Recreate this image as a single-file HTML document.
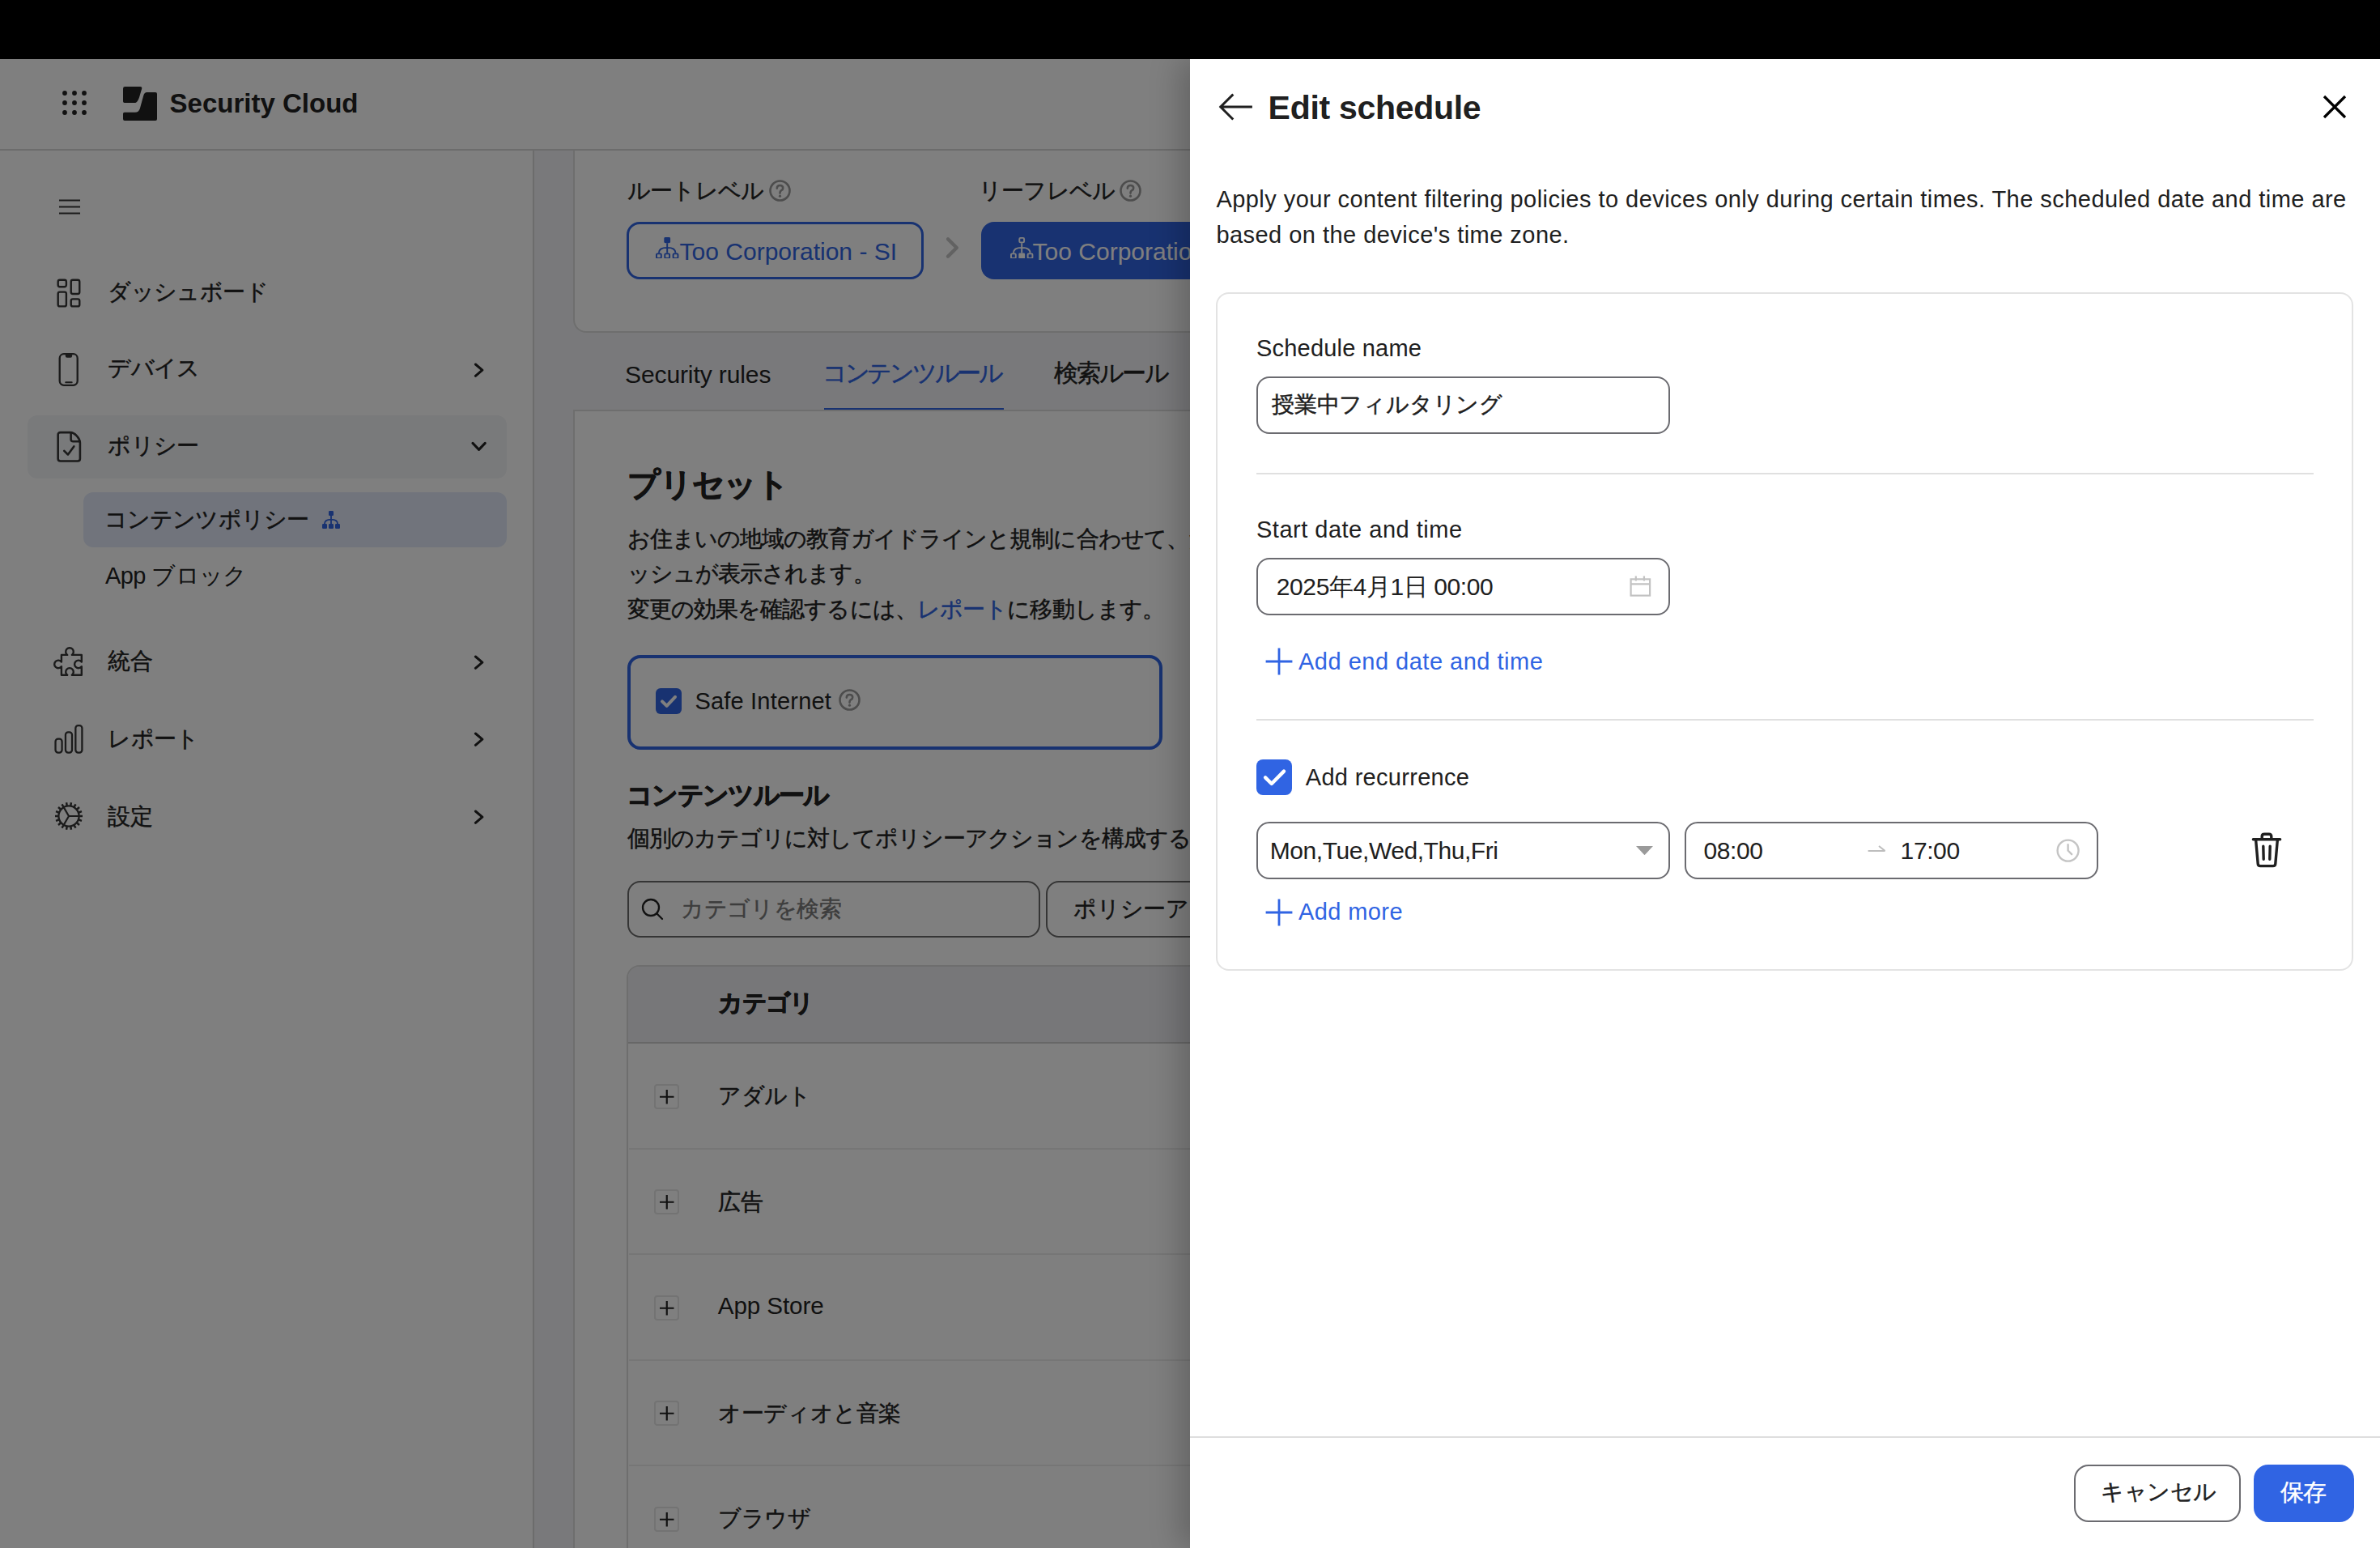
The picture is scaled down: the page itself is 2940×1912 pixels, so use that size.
<!DOCTYPE html>
<html><head><meta charset="utf-8">
<style>
html,body{margin:0;padding:0;background:#000;overflow:hidden;}
body{width:2940px;height:1912px;}
#root{zoom:2;width:1470px;height:956px;position:relative;overflow:hidden;background:#000;font-family:"Liberation Sans",sans-serif;color:#222;}
.a{position:absolute;white-space:nowrap;margin:0;}
@media (max-width:2000px){body{width:1470px;height:956px;}#root{zoom:1;}}
</style></head>
<body><div id="root">
<div class="a" style="left:0.00px;top:36.35px;width:1470.00px;height:919.65px;box-sizing:border-box;background:#f2f3f6;"></div>
<div class="a" style="left:354.20px;top:60.00px;width:1145.80px;height:145.50px;box-sizing:border-box;background:#fff;border:1px solid #dddddd;border-radius:8px;"></div>
<div class="a" style="left:387.50px;top:111.17px;font-size:14px;line-height:14px;-webkit-text-stroke:0.22px currentColor;color:#222222;letter-spacing:-0.4px;">ルートレベル</div>
<svg class="a" style="left:474.80px;top:111.20px;" width="13.5" height="13.5" viewBox="0 0 13.5 13.5" fill="none"><circle cx="6.75" cy="6.75" r="6" stroke="#9a9a9a" stroke-width="1.3"/><path d="M4.9 5.3Q4.9 3.5 6.75 3.5Q8.6 3.5 8.6 5.1Q8.6 6.1 7.6 6.6Q6.75 7.1 6.75 8V8.3" stroke="#9a9a9a" stroke-width="1.3" stroke-linecap="round"/><circle cx="6.75" cy="10.1" r="0.8" fill="#9a9a9a"/></svg>
<div class="a" style="left:604.50px;top:111.17px;font-size:14px;line-height:14px;-webkit-text-stroke:0.22px currentColor;color:#222222;letter-spacing:-0.4px;">リーフレベル</div>
<svg class="a" style="left:691.40px;top:111.20px;" width="13.5" height="13.5" viewBox="0 0 13.5 13.5" fill="none"><circle cx="6.75" cy="6.75" r="6" stroke="#9a9a9a" stroke-width="1.3"/><path d="M4.9 5.3Q4.9 3.5 6.75 3.5Q8.6 3.5 8.6 5.1Q8.6 6.1 7.6 6.6Q6.75 7.1 6.75 8V8.3" stroke="#9a9a9a" stroke-width="1.3" stroke-linecap="round"/><circle cx="6.75" cy="10.1" r="0.8" fill="#9a9a9a"/></svg>
<div class="a" style="left:387.20px;top:137.20px;width:183.55px;height:35.55px;box-sizing:border-box;border:1.5px solid #3064e3;border-radius:8px;"></div>
<svg class="a" style="left:405.20px;top:146.30px;" width="14.2" height="13.4" viewBox="0 0 11 11" preserveAspectRatio="none" fill="none"><rect x="4.0" y="0.0" width="3.0" height="3.0" rx="0.6" fill="#3064e3"/><rect x="0.375" y="8.375" width="2.25" height="2.25" rx="0.5" stroke="#3064e3" stroke-width="0.75"/><rect x="4.375" y="8.375" width="2.25" height="2.25" rx="0.5" stroke="#3064e3" stroke-width="0.75"/><rect x="8.375" y="8.375" width="2.25" height="2.25" rx="0.5" stroke="#3064e3" stroke-width="0.75"/><path d="M5.5 3V8M1.5 8C1.5 6.1 3.2 5.3 5.5 5.3C7.8 5.3 9.5 6.1 9.5 8" stroke="#3064e3" stroke-width="0.75"/></svg>
<div class="a" style="left:419.80px;top:147.82px;font-size:15px;line-height:15px;color:#3064e3;">Too Corporation - SI</div>
<svg class="a" style="left:583.60px;top:146.00px;" width="9.6" height="14" viewBox="0 0 9.6 14" fill="none"><path d="M2 1.6L7.4 7L2 12.4" stroke="#c4c4c4" stroke-width="2.2" stroke-linecap="round" stroke-linejoin="round"/></svg>
<div class="a" style="left:606.00px;top:137.20px;width:294.00px;height:35.55px;box-sizing:border-box;background:#3064e3;border-radius:8px;"></div>
<svg class="a" style="left:624.10px;top:146.30px;" width="14.2" height="13.4" viewBox="0 0 11 11" preserveAspectRatio="none" fill="none"><rect x="4.375" y="0.375" width="2.25" height="2.25" rx="0.5" stroke="#fff" stroke-width="0.75"/><rect x="0.375" y="8.375" width="2.25" height="2.25" rx="0.5" stroke="#fff" stroke-width="0.75"/><rect x="4.0" y="8.0" width="3.0" height="3.0" rx="0.6" fill="#fff"/><rect x="8.375" y="8.375" width="2.25" height="2.25" rx="0.5" stroke="#fff" stroke-width="0.75"/><path d="M5.5 3V8M1.5 8C1.5 6.1 3.2 5.3 5.5 5.3C7.8 5.3 9.5 6.1 9.5 8" stroke="#fff" stroke-width="0.75"/></svg>
<div class="a" style="left:637.80px;top:147.82px;font-size:15px;line-height:15px;color:#fff;">Too Corporation - SI</div>
<div class="a" style="left:386.00px;top:223.87px;font-size:15px;line-height:15px;color:#222222;letter-spacing:-0.05px;">Security rules</div>
<div class="a" style="left:508.00px;top:223.12px;font-size:15px;line-height:15px;-webkit-text-stroke:0.22px currentColor;color:#3064e3;letter-spacing:-1.65px;">コンテンツルール</div>
<div class="a" style="left:651.20px;top:223.12px;font-size:15px;line-height:15px;-webkit-text-stroke:0.22px currentColor;color:#222222;letter-spacing:-1.2px;">検索ルール</div>
<div class="a" style="left:354.20px;top:253.00px;width:1145.80px;height:847.00px;box-sizing:border-box;background:#fff;border:1px solid #dddddd;"></div>
<div class="a" style="left:509.00px;top:252.00px;width:111.00px;height:1.00px;box-sizing:border-box;background:#3064e3;"></div>
<div class="a" style="left:387.50px;top:289.00px;font-size:20px;line-height:20px;-webkit-text-stroke:0.45px currentColor;font-weight:700;color:#222222;letter-spacing:-0.6px;">プリセット</div>
<div class="a" style="left:387.30px;top:325.82px;font-size:14px;line-height:14px;-webkit-text-stroke:0.22px currentColor;color:#222222;letter-spacing:-0.45px;">お住まいの地域の教育ガイドラインと規制に合わせて、たフィルタリングポリシーを選択します。ポリシーにはダ</div>
<div class="a" style="left:387.30px;top:347.57px;font-size:14px;line-height:14px;-webkit-text-stroke:0.22px currentColor;color:#222222;letter-spacing:-0.45px;">ッシュが表示されます。</div>
<div class="a" style="left:387.30px;top:369.57px;font-size:14px;line-height:14px;-webkit-text-stroke:0.22px currentColor;color:#222222;letter-spacing:-0.45px;">変更の効果を確認するには、<span style="color:#3064e3">レポート</span>に移動します。</div>
<div class="a" style="left:387.25px;top:404.40px;width:330.75px;height:58.50px;box-sizing:border-box;border:2px solid #3064e3;border-radius:8px;"></div>
<div class="a" style="left:405.00px;top:425.00px;width:16.00px;height:16.00px;box-sizing:border-box;background:#3064e3;border-radius:3px;"></div>
<svg class="a" style="left:405.00px;top:425.00px;" width="16" height="16" viewBox="0 0 16 16" fill="none"><path d="M4 8.2L6.8 10.9L12 5.4" stroke="#fff" stroke-width="2" stroke-linecap="round" stroke-linejoin="round"/></svg>
<div class="a" style="left:429.20px;top:426.10px;font-size:14.5px;line-height:14.5px;color:#222222;letter-spacing:0.1px;">Safe Internet</div>
<svg class="a" style="left:518.00px;top:425.50px;" width="13.5" height="13.5" viewBox="0 0 13.5 13.5" fill="none"><circle cx="6.75" cy="6.75" r="6" stroke="#9a9a9a" stroke-width="1.3"/><path d="M4.9 5.3Q4.9 3.5 6.75 3.5Q8.6 3.5 8.6 5.1Q8.6 6.1 7.6 6.6Q6.75 7.1 6.75 8V8.3" stroke="#9a9a9a" stroke-width="1.3" stroke-linecap="round"/><circle cx="6.75" cy="10.1" r="0.8" fill="#9a9a9a"/></svg>
<div class="a" style="left:387.00px;top:482.88px;font-size:16px;line-height:16px;-webkit-text-stroke:0.45px currentColor;font-weight:700;color:#222222;letter-spacing:-0.85px;">コンテンツルール</div>
<div class="a" style="left:387.30px;top:511.07px;font-size:14px;line-height:14px;-webkit-text-stroke:0.22px currentColor;color:#222222;letter-spacing:-0.45px;">個別のカテゴリに対してポリシーアクションを構成することができます。</div>
<div class="a" style="left:387.25px;top:543.80px;width:255.15px;height:35.10px;box-sizing:border-box;border:1px solid #6a6a6a;border-radius:8px;background:#fff;"></div>
<svg class="a" style="left:396.00px;top:554.60px;" width="14" height="14" viewBox="0 0 14 14" fill="none"><circle cx="6" cy="6" r="5" stroke="#222222" stroke-width="1.15"/><path d="M9.6 9.6L13 13" stroke="#222222" stroke-width="1.15" stroke-linecap="round"/></svg>
<div class="a" style="left:420.60px;top:554.47px;font-size:14px;line-height:14px;-webkit-text-stroke:0.22px currentColor;color:#7a7a7a;letter-spacing:-0.2px;">カテゴリを検索</div>
<div class="a" style="left:646.20px;top:543.80px;width:353.80px;height:35.10px;box-sizing:border-box;border:1px solid #6a6a6a;border-radius:8px;background:#fff;"></div>
<div class="a" style="left:663.20px;top:554.47px;font-size:14px;line-height:14px;-webkit-text-stroke:0.22px currentColor;color:#222222;letter-spacing:-0.2px;">ポリシーアクション</div>
<div class="a" style="left:386.80px;top:595.75px;width:813.20px;height:404.25px;box-sizing:border-box;border:1px solid #dddddd;border-radius:8px;background:#fff;overflow:hidden;"></div>
<div class="a" style="left:387.80px;top:596.75px;width:812.20px;height:47.55px;box-sizing:border-box;background:#eeeff3;border-bottom:1px solid #cfcfcf;border-top-left-radius:7px;"></div>
<div class="a" style="left:443.60px;top:612.13px;font-size:15px;line-height:15px;-webkit-text-stroke:0.45px currentColor;font-weight:700;color:#222222;letter-spacing:-0.8px;">カテゴリ</div>
<div class="a" style="left:403.75px;top:669.45px;width:15.75px;height:15.50px;box-sizing:border-box;border:1px solid #e6e6e6;border-radius:2px;"></div>
<svg class="a" style="left:403.75px;top:669.45px;" width="15.75" height="15.75" viewBox="0 0 15.75 15.75" fill="none"><path d="M7.875 3.5V12.25M3.5 7.875H12.25" stroke="#222222" stroke-width="1.1"/></svg>
<div class="a" style="left:443.60px;top:670.17px;font-size:14px;line-height:14px;-webkit-text-stroke:0.22px currentColor;color:#222222;letter-spacing:-0.2px;">アダルト</div>
<div class="a" style="left:388.25px;top:708.90px;width:811.75px;height:1.00px;box-sizing:border-box;background:#ececec;"></div>
<div class="a" style="left:403.75px;top:734.70px;width:15.75px;height:15.50px;box-sizing:border-box;border:1px solid #e6e6e6;border-radius:2px;"></div>
<svg class="a" style="left:403.75px;top:734.70px;" width="15.75" height="15.75" viewBox="0 0 15.75 15.75" fill="none"><path d="M7.875 3.5V12.25M3.5 7.875H12.25" stroke="#222222" stroke-width="1.1"/></svg>
<div class="a" style="left:443.60px;top:735.42px;font-size:14px;line-height:14px;-webkit-text-stroke:0.22px currentColor;color:#222222;letter-spacing:-0.2px;">広告</div>
<div class="a" style="left:388.25px;top:774.15px;width:811.75px;height:1.00px;box-sizing:border-box;background:#ececec;"></div>
<div class="a" style="left:403.75px;top:799.95px;width:15.75px;height:15.50px;box-sizing:border-box;border:1px solid #e6e6e6;border-radius:2px;"></div>
<svg class="a" style="left:403.75px;top:799.95px;" width="15.75" height="15.75" viewBox="0 0 15.75 15.75" fill="none"><path d="M7.875 3.5V12.25M3.5 7.875H12.25" stroke="#222222" stroke-width="1.1"/></svg>
<div class="a" style="left:443.40px;top:799.14px;font-size:14.8px;line-height:14.8px;color:#222222;letter-spacing:-0.05px;">App Store</div>
<div class="a" style="left:388.25px;top:839.40px;width:811.75px;height:1.00px;box-sizing:border-box;background:#ececec;"></div>
<div class="a" style="left:403.75px;top:865.20px;width:15.75px;height:15.50px;box-sizing:border-box;border:1px solid #e6e6e6;border-radius:2px;"></div>
<svg class="a" style="left:403.75px;top:865.20px;" width="15.75" height="15.75" viewBox="0 0 15.75 15.75" fill="none"><path d="M7.875 3.5V12.25M3.5 7.875H12.25" stroke="#222222" stroke-width="1.1"/></svg>
<div class="a" style="left:443.60px;top:865.92px;font-size:14px;line-height:14px;-webkit-text-stroke:0.22px currentColor;color:#222222;letter-spacing:-0.2px;">オーディオと音楽</div>
<div class="a" style="left:388.25px;top:904.65px;width:811.75px;height:1.00px;box-sizing:border-box;background:#ececec;"></div>
<div class="a" style="left:403.75px;top:930.45px;width:15.75px;height:15.50px;box-sizing:border-box;border:1px solid #e6e6e6;border-radius:2px;"></div>
<svg class="a" style="left:403.75px;top:930.45px;" width="15.75" height="15.75" viewBox="0 0 15.75 15.75" fill="none"><path d="M7.875 3.5V12.25M3.5 7.875H12.25" stroke="#222222" stroke-width="1.1"/></svg>
<div class="a" style="left:443.60px;top:931.17px;font-size:14px;line-height:14px;-webkit-text-stroke:0.22px currentColor;color:#222222;letter-spacing:-0.2px;">ブラウザ</div>
<div class="a" style="left:0.00px;top:36.35px;width:1470.00px;height:56.50px;box-sizing:border-box;background:#fff;border-bottom:1px solid #d9d9d9;"></div>
<div class="a" style="left:0.00px;top:92.85px;width:330.00px;height:863.15px;box-sizing:border-box;background:#fff;border-right:1px solid #d9d9d9;"></div>
<svg class="a" style="left:38.25px;top:56.20px;" width="15" height="15" viewBox="0 0 15 15" fill="none"><circle cx="1.5" cy="1.5" r="1.45" fill="#222222"/><circle cx="1.5" cy="7.5" r="1.45" fill="#222222"/><circle cx="1.5" cy="13.5" r="1.45" fill="#222222"/><circle cx="7.5" cy="1.5" r="1.45" fill="#222222"/><circle cx="7.5" cy="7.5" r="1.45" fill="#222222"/><circle cx="7.5" cy="13.5" r="1.45" fill="#222222"/><circle cx="13.5" cy="1.5" r="1.45" fill="#222222"/><circle cx="13.5" cy="7.5" r="1.45" fill="#222222"/><circle cx="13.5" cy="13.5" r="1.45" fill="#222222"/></svg>
<svg class="a" style="left:76.00px;top:53.40px;" width="21" height="21" viewBox="0 0 21 21" fill="none"><path fill="#222222" d="M1.2 0H10.6Q11.9 0 11.6 1.3L10.6 4.6Q9.8 7.5 9.3 8.2Q8.6 10 6.8 10H0.9Q0 10 0 9.1V1.2Q0 0 1.2 0Z"/><path fill="#222222" d="M14.8 3.5H20Q21 3.5 21 4.5V20Q21 21 20 21H1Q0 21 0 20V16.8Q0 15.9 0.9 15.9H7.5Q9.6 15.9 10.4 13.6L12.6 5.6Q13.2 3.5 14.8 3.5Z"/></svg>
<div class="a" style="left:104.80px;top:55.36px;font-size:16.5px;line-height:16.5px;font-weight:700;color:#222222;">Security Cloud</div>
<svg class="a" style="left:36.50px;top:123.00px;" width="13.2" height="9.5" viewBox="0 0 13.2 9.5" fill="none"><path d="M0 0.75H13.2M0 4.75H13.2M0 8.75H13.2" stroke="#363636" stroke-width="0.95"/></svg>
<div class="a" style="left:17.00px;top:256.45px;width:296.00px;height:39.10px;box-sizing:border-box;background:#f3f4f6;border-radius:6px;"></div>
<div class="a" style="left:51.60px;top:303.95px;width:261.40px;height:34.05px;box-sizing:border-box;background:#e2e9f9;border-radius:6px;"></div>
<svg class="a" style="left:34.00px;top:171.00px;" width="17" height="20" viewBox="0 0 17 20" fill="none"><g stroke="#363636" stroke-width="1.2"><rect x="1.84" y="1.84" width="5.1" height="4.26" rx="1.1"/><rect x="1.84" y="9.3" width="5.1" height="8.9" rx="1.1"/><rect x="9.86" y="1.84" width="5.27" height="8.66" rx="1.1"/><rect x="9.86" y="13.7" width="5.27" height="4.5" rx="1.1"/></g></svg>
<div class="a" style="left:66.60px;top:173.27px;font-size:14px;line-height:14px;-webkit-text-stroke:0.22px currentColor;color:#222222;letter-spacing:-0.3px;">ダッシュボード</div>
<svg class="a" style="left:36.00px;top:217.50px;" width="13" height="21.5" viewBox="0 0 13 21.5" fill="none"><rect x="0.85" y="1.1" width="11.0" height="19.3" rx="2.6" stroke="#363636" stroke-width="1.15"/><path d="M4.4 1H8.55V2.4Q8.55 3.4 7.55 3.4H5.4Q4.4 3.4 4.4 2.4Z" fill="#363636"/><path d="M4.6 18.6H8.35" stroke="#363636" stroke-width="1.0" stroke-linecap="round"/></svg>
<div class="a" style="left:66.60px;top:220.57px;font-size:14px;line-height:14px;-webkit-text-stroke:0.22px currentColor;color:#222222;letter-spacing:-0.3px;">デバイス</div>
<svg class="a" style="left:292.40px;top:223.90px;" width="7" height="9.2" viewBox="0 0 7 9.2" fill="none"><path d="M1.2 1L5.4 4.6L1.2 8.2" stroke="#222222" stroke-width="1.5" stroke-linecap="round" stroke-linejoin="round"/></svg>
<svg class="a" style="left:34.30px;top:266.00px;" width="16.5" height="20" viewBox="0 0 16.5 20" fill="none"><g stroke="#363636" stroke-width="1.3" stroke-linejoin="round" stroke-linecap="round"><path d="M2.83 1.05H9.0C11.5 1.05 14.95 4.5 14.95 7.57V17.25Q14.95 18.75 13.45 18.75H2.83Q1.33 18.75 1.33 17.25V2.55Q1.33 1.05 2.83 1.05Z"/><path d="M9.3 1.4V5.2Q9.3 6.6 10.7 6.6H14.7"/><path d="M5.13 12.41L7.46 14.74L11.14 9.7"/></g></svg>
<div class="a" style="left:66.60px;top:268.37px;font-size:14px;line-height:14px;-webkit-text-stroke:0.22px currentColor;color:#222222;letter-spacing:-0.3px;">ポリシー</div>
<svg class="a" style="left:290.80px;top:272.50px;" width="9.6" height="7" viewBox="0 0 9.6 7" fill="none"><path d="M1 1.2L4.8 5.2L8.6 1.2" stroke="#222222" stroke-width="1.5" stroke-linecap="round" stroke-linejoin="round"/></svg>
<div class="a" style="left:64.30px;top:313.77px;font-size:14px;line-height:14px;-webkit-text-stroke:0.22px currentColor;color:#222222;letter-spacing:-0.4px;">コンテンツポリシー</div>
<svg class="a" style="left:199.00px;top:315.50px;" width="11" height="11" viewBox="0 0 11 11" preserveAspectRatio="none" fill="none"><rect x="4.0" y="0.0" width="3.0" height="3.0" rx="0.6" fill="#3064e3"/><rect x="0.0" y="8.0" width="3.0" height="3.0" rx="0.6" fill="#3064e3"/><rect x="4.0" y="8.0" width="3.0" height="3.0" rx="0.6" fill="#3064e3"/><rect x="8.0" y="8.0" width="3.0" height="3.0" rx="0.6" fill="#3064e3"/><path d="M5.5 3V8M1.5 8C1.5 6.1 3.2 5.3 5.5 5.3C7.8 5.3 9.5 6.1 9.5 8" stroke="#3064e3" stroke-width="0.9"/></svg>
<div class="a" style="left:65.00px;top:348.60px;font-size:14.5px;line-height:14.5px;color:#222222;letter-spacing:-0.3px;">App ブロック</div>
<svg class="a" style="left:33.00px;top:399.40px;" width="18.5" height="18.5" viewBox="0 0 18.5 18.5" fill="none"><path d="M4.95 4.95H8.6A2.4 2.4 0 1 1 11.4 4.95H17.4V9.3A2.4 2.4 0 1 0 17.4 12.1V17.4H11.4A2.4 2.4 0 1 0 8.6 17.4H4.95V12.1A2.4 2.4 0 1 1 4.95 9.3Z" stroke="#363636" stroke-width="1.2" stroke-linejoin="round"/></svg>
<div class="a" style="left:66.60px;top:401.57px;font-size:14px;line-height:14px;-webkit-text-stroke:0.22px currentColor;color:#222222;letter-spacing:-0.3px;">統合</div>
<svg class="a" style="left:292.40px;top:404.40px;" width="7" height="9.2" viewBox="0 0 7 9.2" fill="none"><path d="M1.2 1L5.4 4.6L1.2 8.2" stroke="#222222" stroke-width="1.5" stroke-linecap="round" stroke-linejoin="round"/></svg>
<svg class="a" style="left:33.00px;top:447.00px;" width="19" height="19" viewBox="0 0 19 19" fill="none"><g stroke="#363636" stroke-width="1.14"><rect x="1.26" y="9.35" width="4.03" height="8.43" rx="1.6"/><rect x="7.47" y="5.21" width="4.03" height="12.57" rx="1.6"/><rect x="13.67" y="1.07" width="4.03" height="16.71" rx="1.6"/></g></svg>
<div class="a" style="left:66.60px;top:449.37px;font-size:14px;line-height:14px;-webkit-text-stroke:0.22px currentColor;color:#222222;letter-spacing:-0.3px;">レポート</div>
<svg class="a" style="left:292.40px;top:451.90px;" width="7" height="9.2" viewBox="0 0 7 9.2" fill="none"><path d="M1.2 1L5.4 4.6L1.2 8.2" stroke="#222222" stroke-width="1.5" stroke-linecap="round" stroke-linejoin="round"/></svg>
<svg class="a" style="left:33.00px;top:494.50px;" width="19" height="19" viewBox="0 0 19 19" fill="none"><circle cx="9.5" cy="9.5" r="6.3" stroke="#363636" stroke-width="1.15"/><path d="M16.10 9.50L18.00 9.50M15.70 11.76L17.49 12.41M14.56 13.74L16.01 14.96M12.80 15.22L13.75 16.86M10.65 16.00L10.98 17.87M8.35 16.00L8.02 17.87M6.20 15.22L5.25 16.86M4.44 13.74L2.99 14.96M3.30 11.76L1.51 12.41M2.90 9.50L1.00 9.50M3.30 7.24L1.51 6.59M4.44 5.26L2.99 4.04M6.20 3.78L5.25 2.14M8.35 3.00L8.02 1.13M10.65 3.00L10.98 1.13M12.80 3.78L13.75 2.14M14.56 5.26L16.01 4.04M15.70 7.24L17.49 6.59" stroke="#363636" stroke-width="1.25"/><path d="M9.5 9.5H15.8M9.5 9.5L6.35 4.05M9.5 9.5L6.35 14.95" stroke="#363636" stroke-width="1.1"/></svg>
<div class="a" style="left:66.60px;top:497.37px;font-size:14px;line-height:14px;-webkit-text-stroke:0.22px currentColor;color:#222222;letter-spacing:-0.3px;">設定</div>
<svg class="a" style="left:292.40px;top:499.90px;" width="7" height="9.2" viewBox="0 0 7 9.2" fill="none"><path d="M1.2 1L5.4 4.6L1.2 8.2" stroke="#222222" stroke-width="1.5" stroke-linecap="round" stroke-linejoin="round"/></svg>
<div class="a" style="left:0.00px;top:36.35px;width:1470.00px;height:919.65px;box-sizing:border-box;background:rgba(0,0,0,0.5);"></div>
<div class="a" style="left:735.00px;top:36.35px;width:735.00px;height:919.65px;box-sizing:border-box;background:#fff;box-shadow:-6px 0 18px rgba(0,0,0,0.22);"></div>
<svg class="a" style="left:752.50px;top:57.50px;" width="21" height="17" viewBox="0 0 21 17" fill="none"><path d="M20.2 8.5H1.6M8.6 1.3L1.4 8.5L8.6 15.7" stroke="#202020" stroke-width="1.5" stroke-linecap="square"/></svg>
<div class="a" style="left:783.30px;top:56.33px;font-size:20.5px;line-height:20.5px;font-weight:700;color:#202020;letter-spacing:-0.15px;">Edit schedule</div>
<svg class="a" style="left:1434.50px;top:58.50px;" width="15" height="15" viewBox="0 0 15 15" fill="none"><path d="M1 1L14 14M14 1L1 14" stroke="#000" stroke-width="1.6"/></svg>
<div class="a" style="left:751.20px;top:116.10px;font-size:14.5px;line-height:14.5px;color:#202020;letter-spacing:0.23px;">Apply your content filtering policies to devices only during certain times. The scheduled date and time are</div>
<div class="a" style="left:751.20px;top:138.10px;font-size:14.5px;line-height:14.5px;color:#202020;letter-spacing:0.23px;">based on the device's time zone.</div>
<div class="a" style="left:751.00px;top:180.50px;width:702.50px;height:419.00px;box-sizing:border-box;border:1px solid #e3e3e3;border-radius:8px;"></div>
<div class="a" style="left:776.00px;top:207.95px;font-size:14.5px;line-height:14.5px;color:#202020;letter-spacing:0.1px;">Schedule name</div>
<div class="a" style="left:776.15px;top:232.30px;width:255.60px;height:35.50px;box-sizing:border-box;border:1px solid #6b6b70;border-radius:8px;"></div>
<div class="a" style="left:785.50px;top:242.87px;font-size:14px;line-height:14px;-webkit-text-stroke:0.22px currentColor;color:#202020;letter-spacing:-0.1px;">授業中フィルタリング</div>
<div class="a" style="left:776.00px;top:291.75px;width:653.00px;height:1.00px;box-sizing:border-box;background:#e0e0e0;"></div>
<div class="a" style="left:776.00px;top:320.10px;font-size:14.5px;line-height:14.5px;color:#202020;letter-spacing:0.25px;">Start date and time</div>
<div class="a" style="left:776.15px;top:344.35px;width:255.60px;height:35.50px;box-sizing:border-box;border:1px solid #6b6b70;border-radius:8px;"></div>
<div class="a" style="left:788.40px;top:354.98px;font-size:15px;line-height:15px;color:#202020;letter-spacing:-0.2px;">2025年4月1日 00:00</div>
<svg class="a" style="left:1006.50px;top:355.50px;" width="13.5" height="13" viewBox="0 0 13.5 13" fill="none"><g stroke="#c2c2c2" stroke-width="1.1"><rect x="0.8" y="2.2" width="11.75" height="10.1"/><path d="M0.8 5.2H12.55M3.9 0.3V3.2M8.97 0.3V3.2"/></g></svg>
<svg class="a" style="left:781.50px;top:399.80px;" width="17" height="17" viewBox="0 0 17 17" fill="none"><path d="M8.5 0.3V16.7M0.3 8.5H16.7" stroke="#3064e3" stroke-width="1.4"/></svg>
<div class="a" style="left:802.00px;top:401.30px;font-size:14.5px;line-height:14.5px;color:#3064e3;letter-spacing:0.25px;">Add end date and time</div>
<div class="a" style="left:776.00px;top:443.85px;width:653.00px;height:1.00px;box-sizing:border-box;background:#e0e0e0;"></div>
<div class="a" style="left:776.10px;top:469.00px;width:21.90px;height:22.00px;box-sizing:border-box;background:#3064e3;border-radius:4px;"></div>
<svg class="a" style="left:776.10px;top:469.00px;" width="22" height="22" viewBox="0 0 22 22" fill="none"><path d="M5.55 11.2L9.4 15.0L17.0 7.3" stroke="#fff" stroke-width="2.2" stroke-linecap="round" stroke-linejoin="round"/></svg>
<div class="a" style="left:806.40px;top:473.10px;font-size:14.5px;line-height:14.5px;color:#202020;letter-spacing:0.15px;">Add recurrence</div>
<div class="a" style="left:776.15px;top:507.30px;width:255.60px;height:35.50px;box-sizing:border-box;border:1px solid #6b6b70;border-radius:8px;"></div>
<div class="a" style="left:784.40px;top:517.93px;font-size:15px;line-height:15px;color:#202020;letter-spacing:-0.22px;">Mon,Tue,Wed,Thu,Fri</div>
<svg class="a" style="left:1010.60px;top:522.40px;" width="10.5" height="5.6" viewBox="0 0 10.5 5.6" fill="none"><path d="M0 0H10.5L5.25 5.6Z" fill="#9a9a9a"/></svg>
<div class="a" style="left:1040.50px;top:507.30px;width:255.25px;height:35.50px;box-sizing:border-box;border:1px solid #6b6b70;border-radius:8px;"></div>
<div class="a" style="left:1052.20px;top:517.93px;font-size:15px;line-height:15px;color:#202020;letter-spacing:-0.2px;">08:00</div>
<svg class="a" style="left:1153.30px;top:521.50px;" width="11.5" height="6" viewBox="0 0 11.5 6" fill="none"><path d="M0.3 4H10.8M7 1L10.8 4" stroke="#bdbdbd" stroke-width="1"/></svg>
<div class="a" style="left:1173.80px;top:517.93px;font-size:15px;line-height:15px;color:#202020;letter-spacing:-0.2px;">17:00</div>
<svg class="a" style="left:1269.80px;top:517.80px;" width="14.6" height="14.6" viewBox="0 0 14.6 14.6" fill="none"><circle cx="7.3" cy="7.3" r="6.5" stroke="#c4c4c4" stroke-width="1.2"/><path d="M7.3 3.6V7.3L9.6 9.6" stroke="#c4c4c4" stroke-width="1.2" stroke-linecap="round"/></svg>
<svg class="a" style="left:1390.50px;top:514.00px;" width="19" height="22" viewBox="0 0 19 22" fill="none"><g stroke="#202020" stroke-width="1.7" stroke-linejoin="round" stroke-linecap="round"><path d="M1.2 4.4H17.8"/><path d="M6.6 4.2V2.6Q6.6 1.1 8.1 1.1H10.9Q12.4 1.1 12.4 2.6V4.2"/><path d="M2.8 4.6L4.1 19.4Q4.2 20.8 5.6 20.8H13.4Q14.8 20.8 14.9 19.4L16.2 4.6"/><path d="M7.4 8.6L7.6 16.6M11.6 8.6L11.4 16.6"/></g></svg>
<svg class="a" style="left:781.50px;top:554.80px;" width="17" height="17" viewBox="0 0 17 17" fill="none"><path d="M8.5 0.3V16.7M0.3 8.5H16.7" stroke="#3064e3" stroke-width="1.4"/></svg>
<div class="a" style="left:802.00px;top:556.10px;font-size:14.5px;line-height:14.5px;color:#3064e3;letter-spacing:0.2px;">Add more</div>
<div class="a" style="left:735.00px;top:887.00px;width:735.00px;height:1.00px;box-sizing:border-box;background:#dedede;"></div>
<div class="a" style="left:1280.80px;top:904.25px;width:103.00px;height:35.50px;box-sizing:border-box;border:1px solid #6b6b70;border-radius:9px;background:#fff;"></div>
<div class="a" style="left:1297.50px;top:914.37px;font-size:14px;line-height:14px;-webkit-text-stroke:0.22px currentColor;color:#202020;letter-spacing:-0.2px;">キャンセル</div>
<div class="a" style="left:1392.00px;top:904.25px;width:62.00px;height:35.50px;box-sizing:border-box;background:#3064e3;border-radius:9px;"></div>
<div class="a" style="left:1408.40px;top:914.30px;font-size:14.5px;line-height:14.5px;-webkit-text-stroke:0.22px currentColor;color:#fff;letter-spacing:-0.3px;">保存</div>
</div></body></html>
